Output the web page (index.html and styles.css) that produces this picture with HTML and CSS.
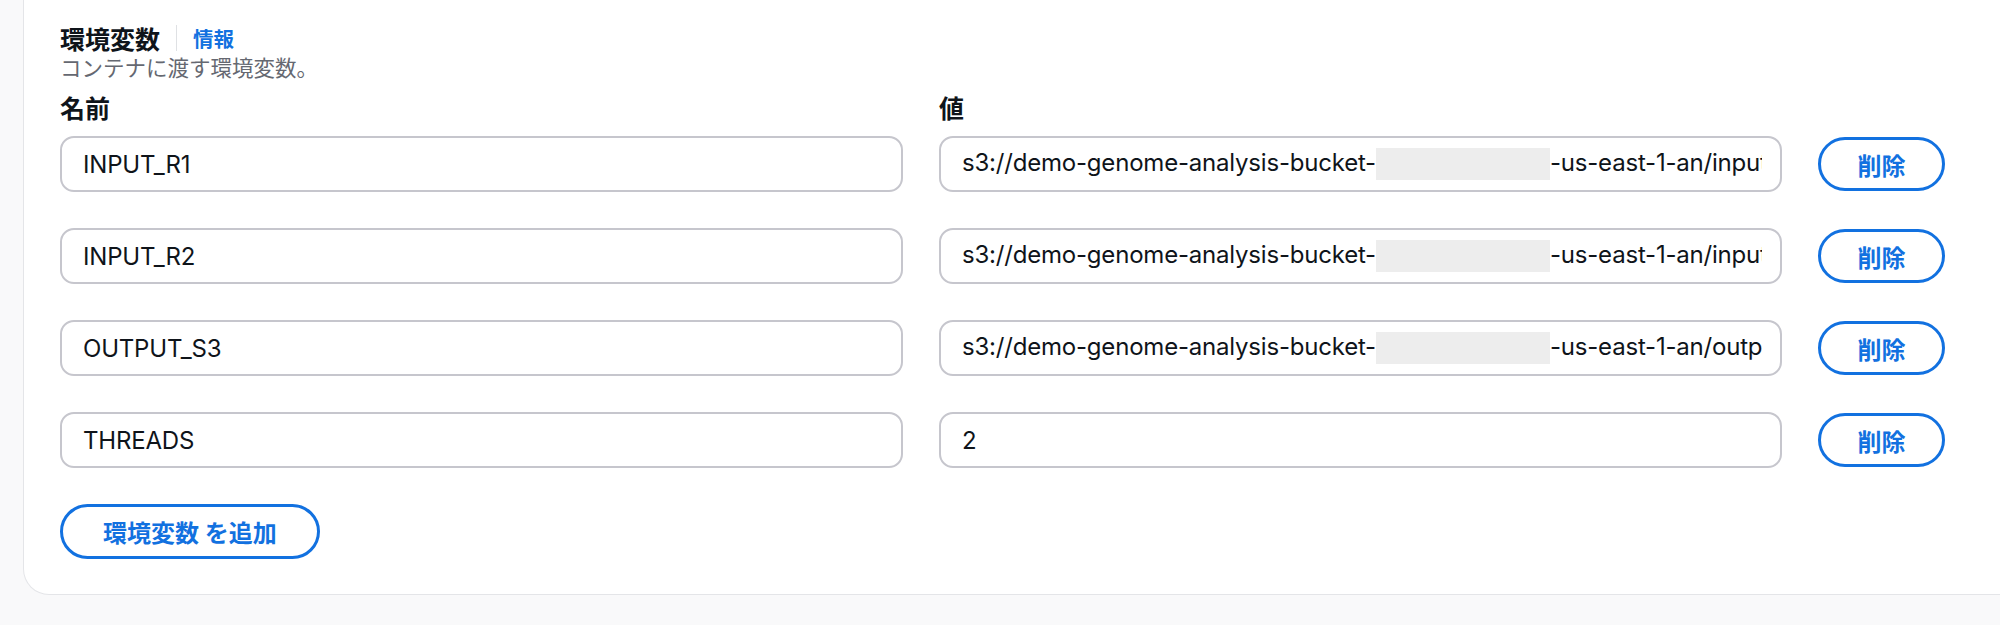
FILE: index.html
```html
<!DOCTYPE html>
<html lang="ja">
<head>
    <meta charset="UTF-8">
    <meta name="viewport" content="width=device-width, initial-scale=1.0">
    <title>環境変数</title>
    <link rel="stylesheet" href="styles.css">
</head>
<body>
    <div class="container">
        <div class="field-header">
            <div class="field-title">
                <span class="field-label">環境変数</span>
                <span class="divider"></span>
                <a href="#" class="info-link">情報</a>
            </div>
            <p class="field-desc">コンテナに渡す環境変数。</p>
        </div>

        <div class="attr-editor">
            <div class="attr-row labels">
                <span class="col-label">名前</span>
                <span class="col-label">値</span>
                <span></span>
            </div>

            <div class="attr-row">
                <div class="text-field"><span class="field-text">INPUT_R1</span></div>
                <div class="text-field"><span class="field-text">s3://demo-genome-analysis-bucket-<span class="masked"></span>-us-east-1-an/input</span></div>
                <button class="btn">削除</button>
            </div>

            <div class="attr-row">
                <div class="text-field"><span class="field-text">INPUT_R2</span></div>
                <div class="text-field"><span class="field-text">s3://demo-genome-analysis-bucket-<span class="masked"></span>-us-east-1-an/input</span></div>
                <button class="btn">削除</button>
            </div>

            <div class="attr-row">
                <div class="text-field"><span class="field-text">OUTPUT_S3</span></div>
                <div class="text-field"><span class="field-text">s3://demo-genome-analysis-bucket-<span class="masked"></span>-us-east-1-an/outp</span></div>
                <button class="btn">削除</button>
            </div>

            <div class="attr-row">
                <div class="text-field"><span class="field-text">THREADS</span></div>
                <div class="text-field"><span class="field-text">2</span></div>
                <button class="btn">削除</button>
            </div>
        </div>

        <button class="btn add-btn">環境変数 を追加</button>
    </div>
</body>
</html>
```

FILE: styles.css
```css
body {
    font-family: Inter, "Noto Sans CJK JP", sans-serif;
    color: #0f141a;
    background: #f9f9fa;
    margin: 0;
    overflow: hidden;
}

.container {
    width: 2100px;
    margin-left: 23px;
    padding: 22px 36px 35px;
    background: #fff;
    border: 1px solid #e4e5e8;
    border-top: none;
    border-radius: 0 0 26px 26px;
}

.field-title {
    display: flex;
    align-items: center;
    height: 32px;
}

.field-label {
    font-size: 25px;
    font-weight: 700;
}

.divider {
    width: 1px;
    height: 26px;
    background: #dfe1e4;
    margin: 0 16px;
}

.info-link {
    font-size: 20.5px;
    font-weight: 700;
    color: #1271e0;
    text-decoration: none;
}

.field-desc {
    margin: 0;
    font-size: 21.5px;
    line-height: 28px;
    color: #656871;
}

.attr-editor {
    width: 1885px;
    display: flex;
    flex-direction: column;
    gap: 36px;
    margin-bottom: 36px;
}

.attr-row {
    display: grid;
    grid-template-columns: repeat(2, minmax(0, 1fr)) 127px;
    column-gap: 36px;
    align-items: center;
}

.attr-row.labels {
    margin-top: 10px;
    margin-bottom: -26px;
}

.col-label {
    font-size: 25px;
    font-weight: 700;
    line-height: 34px;
}

.text-field {
    display: flex;
    align-items: center;
    height: 56px;
    box-sizing: border-box;
    padding: 0 18px 0 21px;
    border: 2px solid #c6c6cd;
    border-radius: 14px;
    background: #fff;
    font-size: 24px;
    letter-spacing: -0.2px;
}

.field-text {
    flex: 1;
    overflow: hidden;
    white-space: nowrap;
}

.masked {
    display: inline-block;
    width: 174px;
    height: 32px;
    background: #ededed;
    vertical-align: middle;
}

.btn {
    font-family: inherit;
    font-size: 24px;
    font-weight: 700;
    color: #1271e0;
    background: #fff;
    border: 3px solid #1271e0;
    border-radius: 34px;
    height: 54px;
    padding: 0 34px;
    cursor: pointer;
}

.attr-row .btn {
    width: 100%;
    padding: 0;
}

.add-btn {
    display: block;
    height: 55px;
    padding: 0 40px;
}
```
